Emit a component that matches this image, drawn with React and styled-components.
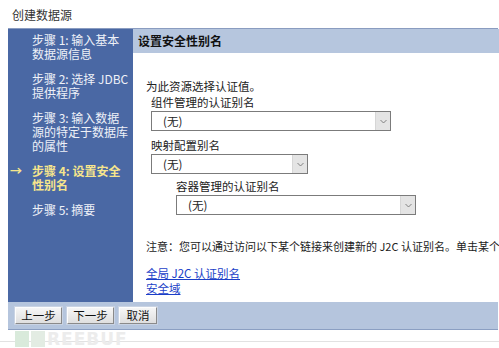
import React from "react";
import styled, { createGlobalStyle } from "styled-components";

const Global = createGlobalStyle`
  html, body { margin: 0; padding: 0; background: #fff; }
  body { font-family: "Noto Sans CJK SC", "Noto Sans", sans-serif; width: 499px; height: 348px; overflow: hidden; position: relative; }
`;

const Page = styled.div`
  position: relative;
  width: 499px;
  height: 348px;
  overflow: hidden;
`;

const Title = styled.div`
  height: 28px;
  padding-left: 12px;
  font-size: 12px;
  line-height: 30px;
  color: #333;
`;

const Frame = styled.div`
  margin-left: 8px;
  width: 490px;
  border-top: 1px solid #8a9cc0;
  position: relative;
  z-index: 2;
`;

const Main = styled.div`
  display: flex;
  height: 273px;
`;

const Sidebar = styled.div`
  width: 125px;
  flex: none;
  background: #4a68a4;
  padding: 4px 0 0 2px;
  box-sizing: border-box;
  display: flex;
  flex-direction: column;
  gap: 11px;
`;

const Step = styled.div`
  display: flex;
  font-size: 12px;
  line-height: 14px;
  color: ${(p) => (p.$current ? "#f6e58c" : "#eef1f8")};
  font-weight: ${(p) => (p.$current ? 700 : 400)};
`;

const Marker = styled.span`
  width: 22px;
  flex: none;
  font-size: 12px;
  text-align: left;
`;

const StepText = styled.div`
  display: flex;
  flex-direction: column;
`;

const Content = styled.div`
  flex: 1;
  display: flex;
  flex-direction: column;
  background: #fff;
`;

const Header = styled.div`
  height: 24px;
  background: #b6c6de;
  padding-left: 5px;
  font-size: 12px;
  font-weight: 700;
  line-height: 24px;
  color: #111;
`;

const Body = styled.div`
  padding-left: 13px;
  display: flex;
  flex-direction: column;
  font-size: 11.5px;
  color: #222;
`;

const Intro = styled.div`
  margin-top: 26px;
  line-height: 15px;
`;

const Field = styled.div`
  margin-left: ${(p) => p.$indent}px;
  margin-top: ${(p) => p.$top}px;
  display: flex;
  flex-direction: column;
`;

const Label = styled.div`
  line-height: 14px;
  margin-bottom: 2px;
`;

const Select = styled.div`
  width: ${(p) => p.$w}px;
  height: 20px;
  box-sizing: border-box;
  border: 1px solid #7b7b7b;
  background: #fff;
  display: flex;
  align-items: center;
`;

const Value = styled.span`
  flex: 1;
  padding-left: 11px;
  line-height: 18px;
`;

const Arrow = styled.span`
  width: 14px;
  align-self: stretch;
  background: #e4e4e4;
  border-left: 1px solid #d6d6d6;
  display: flex;
  align-items: center;
  justify-content: center;
`;

const Note = styled.div`
  margin-top: 24px;
  line-height: 15px;
  font-size: 11px;
  white-space: nowrap;
`;

const Links = styled.div`
  margin-top: 12px;
  display: flex;
  flex-direction: column;
`;

const Link = styled.a`
  color: #1b3fc8;
  text-decoration: underline;
  line-height: 15px;
  width: fit-content;
`;

const ButtonBar = styled.div`
  height: 28px;
  box-sizing: border-box;
  background: #b5c5dd;
  border-bottom: 1px solid #8b9fc2;
  display: flex;
  align-items: center;
  padding-left: 7px;
  gap: 5px;
`;

const Button = styled.button`
  width: ${(p) => p.$w}px;
  height: 17px;
  padding: 0;
  font-family: inherit;
  font-size: 11.5px;
  line-height: 15px;
  color: #111;
  background: linear-gradient(#f6f6f6, #dfdfdf);
  border: 1px solid;
  border-color: #fdfdfd #8a8a8a #8a8a8a #fdfdfd;
  box-shadow: 0 0 0 1px #c9d3e3;
`;

const Rule = styled.div`
  position: absolute;
  left: 0;
  right: 0;
  top: 341px;
  height: 1px;
  background: #e2e2e2;
`;

const Watermark = styled.div`
  position: absolute;
  left: 15px;
  top: 329px;
  display: flex;
  align-items: center;
  gap: 2px;
  z-index: 1;
`;

const WatermarkText = styled.span`
  font-family: "DejaVu Sans", sans-serif;
  font-weight: 700;
  font-size: 17px;
  letter-spacing: 1px;
  color: #ececec;
`;

function Chevron() {
  return (
    <svg width="7" height="5" viewBox="0 0 7 5">
      <path d="M0.5 1 L3.5 4 L6.5 1" fill="none" stroke="#777" strokeWidth="0.9" />
    </svg>
  );
}

function AliasSelect({ w }) {
  return (
    <Select $w={w}>
      <Value>(无)</Value>
      <Arrow>
        <Chevron />
      </Arrow>
    </Select>
  );
}

const steps = [
  { lines: ["步骤 1: 输入基本", "数据源信息"] },
  { lines: ["步骤 2: 选择 JDBC", "提供程序"] },
  { lines: ["步骤 3: 输入数据", "源的特定于数据库", "的属性"] },
  { lines: ["步骤 4: 设置安全", "性别名"], current: true },
  { lines: ["步骤 5: 摘要"] },
];

export default function App() {
  return (
    <Page>
      <Global />
      <Title>创建数据源</Title>
      <Frame>
        <Main>
          <Sidebar>
            {steps.map((s, i) => (
              <Step key={i} $current={s.current}>
                <Marker>{s.current ? "→" : ""}</Marker>
                <StepText>
                  {s.lines.map((l) => (
                    <span key={l}>{l}</span>
                  ))}
                </StepText>
              </Step>
            ))}
          </Sidebar>
          <Content>
            <Header>设置安全性别名</Header>
            <Body>
              <Intro>为此资源选择认证值。</Intro>
              <Field $indent={5} $top={1}>
                <Label>组件管理的认证别名</Label>
                <AliasSelect w={240} />
              </Field>
              <Field $indent={5} $top={7}>
                <Label>映射配置别名</Label>
                <AliasSelect w={157} />
              </Field>
              <Field $indent={30} $top={5}>
                <Label>容器管理的认证别名</Label>
                <AliasSelect w={240} />
              </Field>
              <Note>注意：您可以通过访问以下某个链接来创建新的 J2C 认证别名。单击某个</Note>
              <Links>
                <Link href="#">全局 J2C 认证别名</Link>
                <Link href="#">安全域</Link>
              </Links>
            </Body>
          </Content>
        </Main>
        <ButtonBar>
          <Button $w={47}>上一步</Button>
          <Button $w={47}>下一步</Button>
          <Button $w={38}>取消</Button>
        </ButtonBar>
      </Frame>
      <Rule />
      <Watermark>
        <svg width="30" height="16" viewBox="0 0 30 16">
          <rect x="0" y="0" width="14" height="16" fill="#d9eadb" />
          <rect x="16" y="0" width="14" height="16" fill="#e3ece3" />
        </svg>
        <WatermarkText>REEBUF</WatermarkText>
      </Watermark>
    </Page>
  );
}
